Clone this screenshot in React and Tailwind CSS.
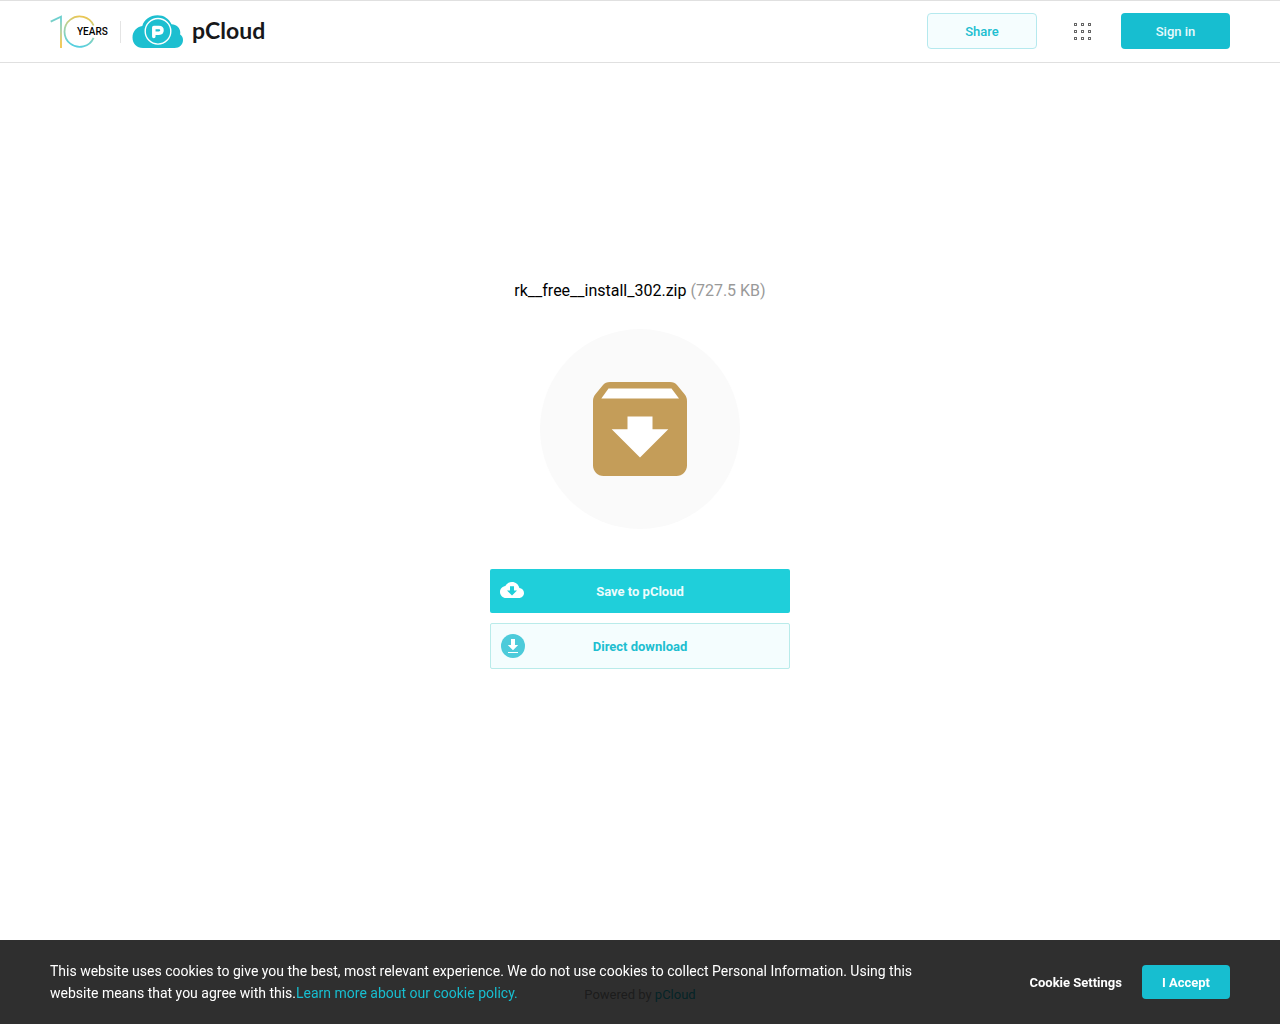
import React from 'react';

const DOTS = [1, 8, 15];

function YearsLogo() {
  return (
    <svg width="60" height="36" viewBox="0 0 60 36" role="img" aria-label="10 years">
      <defs>
        <linearGradient id="one" x1="0" y1="0" x2="0" y2="36" gradientUnits="userSpaceOnUse">
          <stop offset="0.15" stopColor="#6fd0cf" />
          <stop offset="0.5" stopColor="#b5cf9b" />
          <stop offset="0.8" stopColor="#efc54e" />
        </linearGradient>
        <linearGradient id="zero" x1="34" y1="0" x2="27" y2="36" gradientUnits="userSpaceOnUse">
          <stop offset="0.05" stopColor="#efc54e" />
          <stop offset="0.45" stopColor="#a9d3a6" />
          <stop offset="0.9" stopColor="#55cfe0" />
        </linearGradient>
      </defs>
      <path d="M0.7 7.6L11 2.6V34" fill="none" stroke="url(#one)" strokeWidth="1.8" />
      <path d="M43.6 11.5A15.2 15.2 0 1 0 43.6 23.8" fill="none" stroke="url(#zero)" strokeWidth="1.8" />
      <text x="27" y="21" fontSize="10" fontWeight="500" className="fill-black font-[Roboto,sans-serif]">
        YEARS
      </text>
    </svg>
  );
}

function CloudLogo() {
  return (
    <svg width="51" height="34" viewBox="0 0 51 34" aria-hidden="true">
      <path
        d="M11 33C4.6 33 0.5 28.5 0.5 22.5C0.5 16.3 4.6 11.8 10.3 10.9C12.2 4.6 17.9 0.3 25.5 0.3C32 0.3 37 3.7 39.5 9.2C44.6 9.4 48.3 13 48.3 17.7C48.3 18.3 48.2 18.8 48 19.3C50 20.7 51 22.7 51 25C51 29.6 47.5 33 42.5 33Z"
        fill="#1dbfd0"
      />
      <circle cx="26" cy="16.3" r="12.8" fill="none" stroke="#fff" strokeWidth="1.4" />
      <path
        d="M21.8 21.6V12.4H27C28.9 12.4 30 13.7 30 15.3C30 17 28.9 18.2 27 18.2H22.5"
        fill="none"
        stroke="#fff"
        strokeWidth="3.5"
        strokeLinecap="round"
        strokeLinejoin="round"
      />
    </svg>
  );
}

function AppsIcon() {
  return (
    <svg width="18" height="18" viewBox="0 0 18 18" aria-hidden="true">
      {DOTS.map((y) => DOTS.map((x) => (
        <rect key={`${x}-${y}`} x={x - 0.5} y={y - 0.5} width="2" height="2" fill="none" stroke="#666" />
      )))}
    </svg>
  );
}

function ArchiveIcon() {
  return (
    <svg width="94" height="94" viewBox="0 0 94 94" aria-hidden="true">
      <path
        d="M17 0H77C80 0 82.5 1 84.2 3.2L91.6 12.3C93.2 14.2 94 16.5 94 19V83.5C94 89.3 89.3 94 83.5 94H10.5C4.7 94 0 89.3 0 83.5V19C0 16.5 0.8 14.2 2.4 12.3L9.8 3.2C11.5 1 14 0 17 0Z"
        fill="#c49d59"
      />
      <path d="M15.5 6.5H78.5L86 16.5H8.3Z" fill="#fff" />
      <path d="M34.5 34.5H59.5V47.3H75.3L47 75.5L18.7 47.3H34.5Z" fill="#fff" />
    </svg>
  );
}

function CloudDownloadIcon() {
  return (
    <svg width="24" height="18" viewBox="0 4 24 18" aria-hidden="true">
      <path
        fill="#fff"
        d="M19.35 10.04C18.67 6.59 15.64 4 12 4 9.11 4 6.6 5.64 5.35 8.04 2.34 8.36 0 10.91 0 14c0 3.31 2.69 6 6 6h13c2.76 0 5-2.24 5-5 0-2.64-2.05-4.78-4.65-4.96z"
      />
      <path d="M10 8.300h4v4.200h3L12 17.500l-5-5h3z" fill="#1fcfda" />
    </svg>
  );
}

function DirectDownloadIcon() {
  return (
    <svg width="24" height="24" viewBox="0 0 24 24" aria-hidden="true">
      <circle cx="12" cy="12" r="12" fill="#4dcbda" />
      <path d="M10 5h4v6h3.2L12 16.2L6.8 11H10z" fill="#fff" />
      <path d="M7 18.5h10" stroke="#fff" />
    </svg>
  );
}

function Header() {
  return (
    <header className="flex items-start justify-between border-y border-[#e0e0e0] px-[50px] py-3">
      <a href="#home" className="flex items-center pt-px">
        <YearsLogo />
        <span className="ml-[10px] h-[22px] w-px bg-[#e4e4e4]" />
        <span className="ml-[11px]">
          <CloudLogo />
        </span>
        <span className="ml-[9px] pb-1 font-[Lato,sans-serif] text-[23px] leading-6 font-bold text-[#17181a]">
          pCloud
        </span>
      </a>
      <nav className="flex items-center text-[13px] leading-5 font-medium">
        <button
          type="button"
          className="h-9 w-[110px] rounded-sm border border-[#b5e9ee] bg-[#f5fdfe] pt-px text-[#20bed0]"
        >
          Share
        </button>
        <button type="button" aria-label="Apps" className="mr-[29px] ml-[37px] pt-px">
          <AppsIcon />
        </button>
        <button type="button" className="h-9 w-[109px] rounded-sm bg-[#17bed0] pt-px text-[#e8fafc]">
          Sign in
        </button>
      </nav>
    </header>
  );
}

function CookieBar() {
  return (
    <div className="fixed inset-x-0 bottom-0 flex items-center justify-between bg-black/[0.815] px-[50px] py-5">
      <p className="max-w-4xl text-[14px] leading-[22px] text-white">
        This website uses cookies to give you the best, most relevant experience. We do not use cookies to collect
        Personal Information. Using this website means that you agree with this.
        <a href="#cookies" className="text-[#17bed0]">Learn more about our cookie policy.</a>
      </p>
      <div className="flex shrink-0 items-center gap-5 text-[13px] leading-5 font-bold text-white">
        <button type="button" className="pt-px">Cookie Settings</button>
        <button type="button" className="h-[34px] rounded-sm bg-[#17bed0] px-5 pt-px">I Accept</button>
      </div>
    </div>
  );
}

export default function App() {
  return (
    <div className="flex min-h-screen flex-col bg-white font-[Roboto,sans-serif]">
      <Header />
      <main className="flex flex-1 flex-col items-center justify-center pb-20">
        <h1 className="text-base leading-6 text-black">
          rk__free__install_302.zip <span className="text-[#999]">(727.5 KB)</span>
        </h1>
        <div className="mt-[26px] flex size-[200px] items-center justify-center rounded-full bg-[#fafafa]">
          <ArchiveIcon />
        </div>
        <div className="mt-10 flex w-[300px] flex-col gap-[10px] text-[13px] leading-5 font-bold">
          <button
            type="button"
            className="grid h-11 grid-cols-[24px_1fr_24px] items-center rounded-xs bg-[#1fcfda] px-[10px] text-[#edfcfd]"
          >
            <CloudDownloadIcon />
            <span className="pt-px">Save to pCloud</span>
          </button>
          <button
            type="button"
            className="grid h-[46px] grid-cols-[24px_1fr_24px] items-center rounded-xs border border-[#b9ebea] bg-[#f4fdfe] px-[10px] text-[#20bed0]"
          >
            <DirectDownloadIcon />
            <span className="pt-px">Direct download</span>
          </button>
        </div>
      </main>
      <footer className="pt-5 pb-[19px] text-center text-[13px] leading-5 text-[#999]">
        Powered by <a href="#pcloud" className="text-[#17bed0]">pCloud</a>
      </footer>
      <CookieBar />
    </div>
  );
}
